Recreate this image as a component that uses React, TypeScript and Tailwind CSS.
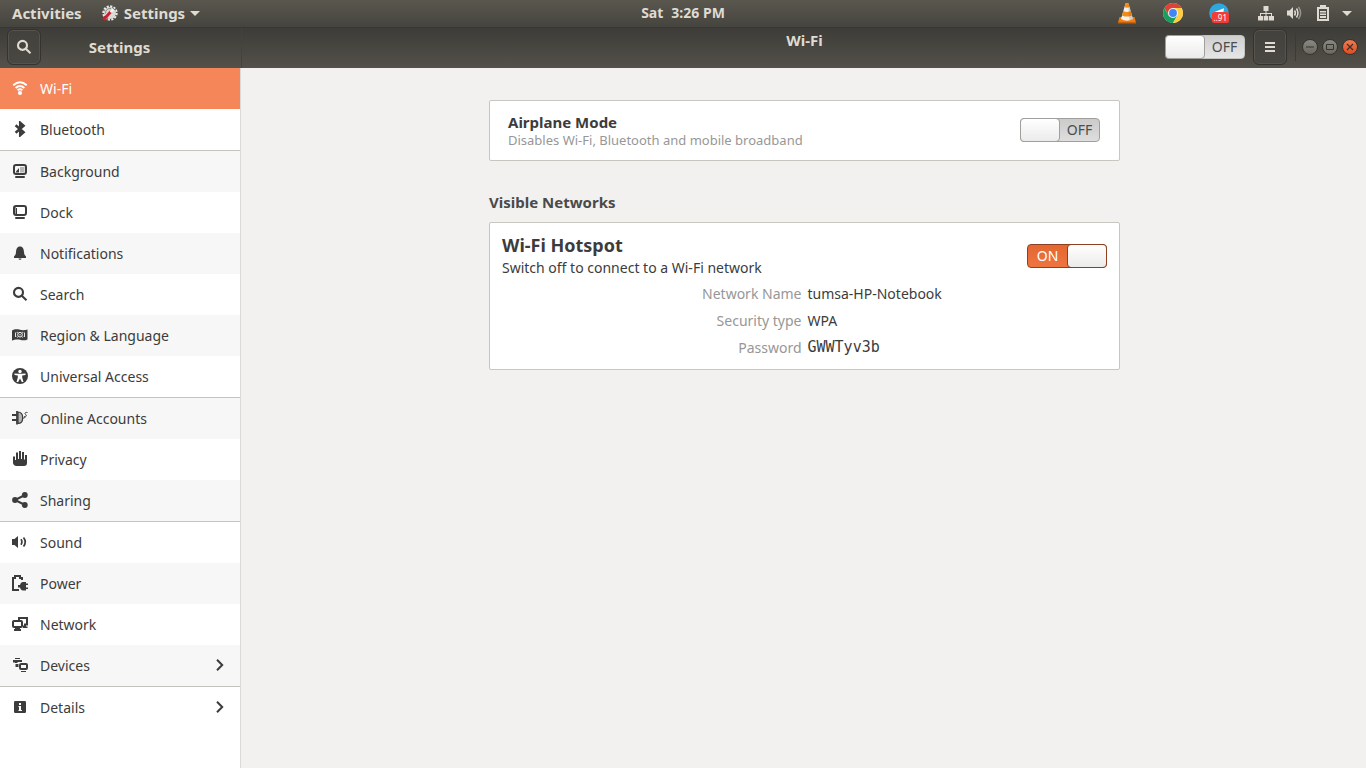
import React, { useState } from "react";

type IconName =
  | "wifi" | "bluetooth" | "background" | "dock" | "bell" | "search" | "region"
  | "access" | "online" | "privacy" | "sharing" | "sound" | "power" | "network"
  | "devices" | "details";

const shapes: Record<IconName, React.ReactNode> = {
  wifi: (
    <>
      <path d="M1.3 5.200Q8 -0.800 14.700 5.200M3.600 8Q8 4 12.400 8M5.600 10.300Q8 8.300 10.400 10.300" fill="none" stroke="currentColor" strokeWidth="1.900" />
      <circle cx="8" cy="13" r="2.100" />
    </>
  ),
  bluetooth: <path d="M3.600 4.200L11.600 11.200L8.200 14.200V1.800L11.600 4.800L3.600 11.800" fill="none" stroke="currentColor" strokeWidth="2.500" />,
  background: (
    <>
      <rect x="2" y="2" width="12" height="9" rx="2" fill="none" stroke="currentColor" strokeWidth="2" />
      <path d="M4 8.500L7 5v3.500zM4 8.500h3v1H4z" />
      <path d="M8 4h4.500v5.500H8z" opacity=".35" />
      <rect x="3" y="13" width="10" height="2" rx="1" />
    </>
  ),
  dock: (
    <>
      <rect x="2" y="2" width="12" height="9" rx="2" fill="none" stroke="currentColor" strokeWidth="2" />
      <path d="M4 4h1v6H4z" />
      <path d="M3 3h1v7H3z" opacity=".5" />
      <rect x="3" y="13" width="10" height="2" rx="1" />
    </>
  ),
  bell: <path d="M8 1.500C5 1.500 4.200 4 4 7 3.900 9 3.400 10.300 2 11.500V13h12v-1.500C12.600 10.300 12.100 9 12 7c-.2-3-1-5.500-4-5.500zM6.500 13.600h3a1.500 1.200 0 0 1-3 0z" />,
  search: <path d="M10.300 10.300L14.500 14.200M11 6.400a4.500 4.500 0 1 1-9 0a4.500 4.500 0 1 1 9 0z" fill="none" stroke="currentColor" strokeWidth="2.100" />,
  region: (
    <>
      <path d="M0 3.500C2 2.200 5 2 8 2.800S13.500 3 15.500 2.500V12.500C13 13.600 10.500 13.500 8 12.800S2 12.700 0 13.600z" />
      <circle cx="8" cy="7.700" r="2.300" fill="none" stroke="#f7f7f7" strokeWidth="1" />
      <path d="M3.500 5.500v4.500M12.500 5.500v4.500M5.600 4.800L4.900 6M10.400 4.800L11.100 6M5.600 10.600L4.900 9.500M10.400 10.600L11.100 9.500" stroke="#f7f7f7" strokeWidth=".9" />
      <circle cx="8" cy="7.700" r=".7" fill="#f7f7f7" />
    </>
  ),
  access: (
    <>
      <circle cx="8" cy="8" r="8" />
      <circle cx="8" cy="3.500" r="1.700" fill="#fff" />
      <path d="M2.500 5.500L6.500 5.800H9.500L13.500 5.500V7L10.200 7.500V9.500L11.500 14H9.800L8 10.500L6.200 14H4.500L5.800 9.500V7.500L2.500 7z" fill="#fff" />
    </>
  ),
  online: (
    <>
      <path d="M0 4h5v2H0zM0 9h5v2H0z" />
      <path d="M5 1v13.500" stroke="currentColor" strokeWidth="1.800" />
      <path d="M6 2c3.200 0 4.700 2.500 4.700 5.700S9.200 13.500 6 13.500z" fill="#b5b5b5" stroke="currentColor" strokeWidth="1.200" />
      <path d="M10.500 8C13.500 8.500 12.500 7 12.800 6.500M15.500 2.500C13 2 12.400 3.500 13.600 4.400S14.500 7.300 12 6.800" fill="none" stroke="currentColor" strokeWidth="1" />
    </>
  ),
  privacy: <path d="M1 5.500h2V9h1V1.500h2V8h1V0h2v8h1V1h2v7.500h1V4h2v8c0 2-1 3-3 3H4.500C2.500 15 1 13.500 1 12z" />,
  sharing: (
    <>
      <path d="M13 3L3 8L13 13" fill="none" stroke="currentColor" strokeWidth="2" />
      <circle cx="12.800" cy="3" r="2.900" />
      <circle cx="3" cy="8" r="2.900" />
      <circle cx="12.800" cy="13" r="2.900" />
    </>
  ),
  sound: (
    <>
      <path d="M0 5h2.500L6 2v12L2.500 11H0z" />
      <path d="M9 5.300Q10.800 8 9 10.700M11.500 3.500Q15 8 11.500 12.500" fill="none" stroke="currentColor" strokeWidth="1.700" />
    </>
  ),
  power: (
    <>
      <path d="M7 15H1V3H3V1H8V3H10V5" fill="none" stroke="currentColor" strokeWidth="2" />
      <path d="M6 10h2C8.500 8 9.500 7 11 7h3v1.500h2V10h-2v2.500h2V14h-2v1.500h-3c-1.500 0-2.500-1-3-3H6z" />
    </>
  ),
  network: (
    <>
      <path d="M7 4V2H15V8.500H12" fill="none" stroke="currentColor" strokeWidth="2" />
      <rect x="1" y="5" width="9" height="6" rx="1" fill="none" stroke="currentColor" strokeWidth="2" />
      <path d="M3 12h5v1h1v2H2v-2h1zM12 9h2v1.500h1.500V12H11v-2z" />
    </>
  ),
  devices: (
    <>
      <path d="M3 1h5v1H3zM1 3h9v2H5.500v1H3V5.500H1zM3.500 7H5v3H3.500zM5 7h1.500v3H5z" />
      <rect x="8" y="7" width="7" height="5" rx="1" fill="none" stroke="currentColor" strokeWidth="2" />
      <path d="M9 14h5V15H9z" />
    </>
  ),
  details: (
    <>
      <rect x="2" y="2" width="12" height="12" rx="1.200" />
      <path d="M7 4h2v2H7zM6.500 7H9v4h1v1H6.500v-1H7V8h-.5z" fill="#fff" />
    </>
  ),
};

function Icon({ name }: { name: IconName }) {
  return (
    <svg viewBox="0 0 16 16" className="mb-px size-4 shrink-0" fill="currentColor" aria-hidden="true">
      {shapes[name]}
    </svg>
  );
}

type Item = { icon: IconName; label: string; endsGroup?: boolean; submenu?: boolean };

const items: Item[] = [
  { icon: "wifi", label: "Wi-Fi" },
  { icon: "bluetooth", label: "Bluetooth", endsGroup: true },
  { icon: "background", label: "Background" },
  { icon: "dock", label: "Dock" },
  { icon: "bell", label: "Notifications" },
  { icon: "search", label: "Search" },
  { icon: "region", label: "Region & Language" },
  { icon: "access", label: "Universal Access", endsGroup: true },
  { icon: "online", label: "Online Accounts" },
  { icon: "privacy", label: "Privacy" },
  { icon: "sharing", label: "Sharing", endsGroup: true },
  { icon: "sound", label: "Sound" },
  { icon: "power", label: "Power" },
  { icon: "network", label: "Network" },
  { icon: "devices", label: "Devices", endsGroup: true, submenu: true },
  { icon: "details", label: "Details", submenu: true },
];

function Switch({ label, initial = false, header = false }: { label: string; initial?: boolean; header?: boolean }) {
  const [on, setOn] = useState(initial);
  const track = on
    ? "flex-row-reverse border-[#8f3f21] bg-linear-to-b from-[#e4672f] to-[#ee7442] text-white"
    : header
      ? "border-[#c4c2be] bg-linear-to-b from-[#cfcfcf] to-[#e6e6e6] text-[#4c4c4c]"
      : "border-[#a09f9c] bg-linear-to-b from-[#cbcbcb] to-[#dedede] text-[#4c4c4c]";
  return (
    <label className={`flex h-6 w-20 shrink-0 cursor-pointer items-stretch rounded border text-sm leading-[22px] ${track}`}>
      <input type="checkbox" role="switch" aria-label={label} checked={on} onChange={(e) => setOn(e.target.checked)} className="sr-only" />
      <span className={`-my-px w-10 rounded border bg-linear-to-b from-white to-[#ebebea] ${on ? "-mr-px border-[#8f3f21]" : "-ml-px border-[#a09f9c]"}`} />
      <span className="flex-1 text-center">{on ? "ON" : "OFF"}</span>
    </label>
  );
}

function SettingsIcon() {
  return (
    <svg viewBox="0 0 16 16" className="size-4" aria-hidden="true">
      <circle cx="8" cy="8" r="6" fill="#d9d9d6" />
      <circle cx="8" cy="8" r="6.700" fill="none" stroke="#e9e9e6" strokeWidth="2" strokeDasharray="2.200 1.300" />
      <path d="M3.500 8.500A4.500 4.500 0 0 1 9 3.600" fill="none" stroke="#8c8a86" strokeWidth="1" />
      <path d="M1.500 14.700L9 6.500" stroke="#cf1f2e" strokeWidth="3" />
      <path d="M8.500 7.300L12 3.800" stroke="#f6f6f6" strokeWidth="2.200" />
      <path d="M10.500 2.300L11.800 4.200L14 5" fill="none" stroke="#77746e" strokeWidth="1" />
    </svg>
  );
}

function VlcIcon() {
  return (
    <svg viewBox="0 0 20 22" className="h-[22px] w-5" aria-hidden="true">
      <path d="M2.500 15h15l1.500 6H1z" fill="#ef7d0b" />
      <path d="M1 20h18v1.500H1z" fill="#c95f04" />
      <path d="M8.500 1.500Q10 .6 11.500 1.500L16 17Q10 20.500 4 17z" fill="#f4f2ee" />
      <path d="M8.500 1.500Q10 .6 11.500 1.500L12.500 5Q10 6.300 7.500 5zM6.300 9Q10 10.800 13.700 9L15 13.400Q10 15.800 5 13.400z" fill="#f28a13" />
      <path d="M11 1.300L15.900 17Q14.600 18 12.500 18.300z" fill="#8a5a2c" opacity=".25" />
    </svg>
  );
}

function ChromeIcon() {
  return (
    <svg viewBox="0 0 24 24" className="size-5" aria-hidden="true">
      <circle cx="12" cy="12" r="12" fill="#fff" />
      <path d="M12 6H22.390A12 12 0 0 0 1.610 6L6.800 15z" fill="#db4437" />
      <path d="M6.800 15L1.610 6A12 12 0 0 0 12 24L17.200 15z" fill="#16a05c" />
      <path d="M17.200 15L12 24A12 12 0 0 0 22.390 6H12z" fill="#ffcd40" />
      <circle cx="12" cy="12" r="6" fill="#f1f1f1" />
      <circle cx="12" cy="12" r="4.700" fill="#4285f4" />
    </svg>
  );
}

function TelegramIcon() {
  return (
    <svg viewBox="0 0 20 20" className="size-5" aria-hidden="true">
      <circle cx="10" cy="10" r="9.800" fill="#2fa6de" />
      <path d="M3.500 9.800L15 5.200L13.500 14L8 10.500z" fill="#fff" />
    </svg>
  );
}

function TopBar() {
  return (
    <header className="grid h-[27px] grid-cols-[1fr_auto_1fr] items-center bg-linear-to-b from-[#5a574f] to-[#45443e] pb-px text-sm font-bold text-[#dfdbd2]">
      <div className="flex items-center gap-5 pl-3 text-[15px]">
        <button className="leading-5">Activities</button>
        <button className="flex items-center gap-1.5 leading-5">
          <SettingsIcon />
          Settings
          <svg viewBox="0 0 10 5" className="-ml-px h-[5px] w-[10px]" fill="currentColor" aria-hidden="true"><path d="M0 0h10L5 5z" /></svg>
        </button>
      </div>
      <button className="flex gap-2 leading-5">
        <span>Sat</span>
        <span>3:26 PM</span>
      </button>
      <div className="flex items-center justify-end pr-[18px]">
        <button aria-label="VLC" className="mr-[26px]"><VlcIcon /></button>
        <button aria-label="Chrome" className="mr-[26px]"><ChromeIcon /></button>
        <button aria-label="Telegram" className="relative mr-[29px]">
          <TelegramIcon />
          <span className="absolute right-0 bottom-0 rounded-xs bg-[#f23c34] px-0.5 text-[8px] leading-[11px] font-normal text-white">..91</span>
        </button>
        <button aria-label="System menu" className="flex items-center gap-3">
          <svg viewBox="0 0 16 16" className="size-4" fill="currentColor" aria-hidden="true">
            <path d="M5.500 1h5v5h-5zM0 11h5v4.500H0zM5.700 11h4.600v4.500H5.700zM11 11h5v4.500h-5zM7.500 6h1v5h-1zM2 8h12v3h-1V9H3v2H2z" />
          </svg>
          <svg viewBox="0 0 16 16" className="size-4" fill="currentColor" aria-hidden="true">
            <path d="M1 5.500h2.500L7 2v12L3.500 10.500H1z" />
            <path d="M8.500 5.500Q10.300 8 8.500 10.500M10.500 3.500Q13.400 8 10.500 12.500" fill="none" stroke="currentColor" strokeWidth="1.500" />
            <path d="M12.500 1.800Q16.700 8 12.500 14.200" fill="none" stroke="currentColor" strokeWidth="1.500" opacity=".5" />
          </svg>
          <svg viewBox="0 0 16 16" className="size-4" fill="currentColor" aria-hidden="true">
            <path d="M6 0h6v2h3v14H3V2h3zM5 4v10h8V4zM6 6h6v1.500H6zM6 8.500h6V10H6zM6 11h6v2H6z" fillRule="evenodd" />
          </svg>
          <svg viewBox="0 0 10 5" className="-mr-1 h-[5px] w-[10px]" fill="currentColor" aria-hidden="true"><path d="M0 0h10L5 5z" /></svg>
        </button>
      </div>
    </header>
  );
}

function HeaderBar() {
  const windowButton = "flex size-4 items-center justify-center rounded-full border border-[#35342f]";
  const toolButton = "flex h-9 w-[34px] items-center justify-center rounded-md border border-[#34332f] bg-[#46453f]/60 shadow-[inset_0_0_0_1px_#55534c]";
  return (
    <div className="flex h-[41px] border-t border-[#383733] bg-linear-to-b from-[#3d3c38] to-[#54514a] font-bold text-[#dfdbd2]">
      <div className="flex w-[242px] shrink-0 items-center border-r border-[#45433e] pb-0.5 pl-[7px]">
        <button aria-label="Search" className={toolButton}><Icon name="search" /></button>
        <h1 className="flex-1 pr-[43px] text-center text-[15px]">Settings</h1>
      </div>
      <div className="grid flex-1 grid-cols-[1fr_auto_1fr] pl-px">
        <h2 className="col-start-2 pt-0.5 text-[15px] leading-5">Wi-Fi</h2>
        <div className="flex items-center justify-end pr-2 pb-0.5 font-normal">
          <Switch label="Wi-Fi" header />
          <button aria-label="Menu" className={`ml-2 ${toolButton}`}>
            <svg viewBox="0 0 10 10" className="size-2.5" fill="currentColor" aria-hidden="true"><path d="M0 0h10v2H0zM0 4h10v2H0zM0 8h10v2H0z" /></svg>
          </button>
          <span className="mr-1.5 ml-2 h-7 w-px bg-[#3b3a35]" />
          <div className="flex gap-1 text-[#35342f]">
            <button aria-label="Minimize" className={`${windowButton} bg-linear-to-b from-[#8b8981] to-[#69675f]`}>
              <svg viewBox="0 0 8 8" className="size-2 shrink-0" fill="currentColor"><path d="M0 3.500h8v1H0z" /></svg>
            </button>
            <button aria-label="Maximize" className={`${windowButton} bg-linear-to-b from-[#8b8981] to-[#69675f]`}>
              <svg viewBox="0 0 8 8" className="size-2 shrink-0" fill="none" stroke="currentColor"><path d="M.5 1.500h7v5h-7z" /></svg>
            </button>
            <button aria-label="Close" className={`${windowButton} bg-linear-to-b from-[#f47850] to-[#df4d1c]`}>
              <svg viewBox="0 0 8 8" className="size-2 shrink-0" fill="none" stroke="currentColor" strokeWidth="1.300"><path d="M1 1l6 6M7 1L1 7" /></svg>
            </button>
          </div>
        </div>
      </div>
    </div>
  );
}

function Sidebar() {
  const [selected, setSelected] = useState(0);
  return (
    <nav className="w-[241px] shrink-0 border-r border-[#dcdad7] bg-white text-sm text-[#3c3c3c]">
      {items.map((item, i) => (
        <button
          key={item.label}
          onClick={() => setSelected(i)}
          className={`box-content flex h-[41px] w-[228px] items-center gap-3 pl-3 text-left ${
            i === selected ? "bg-[#f4865a] text-white" : i % 2 === 0 ? "bg-[#f7f7f7]" : "bg-white"
          } ${item.endsGroup ? "border-b border-[#c5c3c0]" : ""}`}
        >
          <Icon name={item.icon} />
          <span className="flex-1">{item.label}</span>
          {item.submenu && (
            <svg viewBox="0 0 8 12" className="mr-4 mb-px h-3 w-2" fill="none" stroke="currentColor" strokeWidth="2" aria-hidden="true"><path d="M1 .8L6.200 6L1 11.200" /></svg>
          )}
        </button>
      ))}
    </nav>
  );
}

const details = [
  { name: "Network Name", value: "tumsa-HP-Notebook" },
  { name: "Security type", value: "WPA" },
  { name: "Password", value: "GWWTyv3b", mono: true },
];

export default function App() {
  return (
    <div className="flex min-h-screen flex-col bg-[#f2f1ef] font-['Noto_Sans',sans-serif]">
      <TopBar />
      <HeaderBar />
      <div className="flex flex-1">
        <Sidebar />
        <main className="flex-1 pt-8 pr-8 pl-[34px] text-sm text-[#3c3c3c]">
          <div className="mx-auto max-w-[631px]">
            <section className="flex items-center justify-between rounded-xs border border-[#c9c6c2] bg-white pt-[11px] pr-[19px] pb-3 pl-[18px]">
              <div>
                <h3 className="text-[15px] leading-5 font-bold">Airplane Mode</h3>
                <p className="text-[13px] leading-4 text-[#979797]">Disables Wi-Fi, Bluetooth and mobile broadband</p>
              </div>
              <Switch label="Airplane Mode" />
            </section>
            <h3 className="mt-[31px] text-[15px] leading-5 font-bold text-[#4a4a4a]">Visible Networks</h3>
            <section className="mt-2.5 rounded-xs border border-[#c9c6c2] bg-white px-3 pt-2.5 pb-2">
              <div className="flex items-center justify-between">
                <div>
                  <h3 className="text-lg leading-6 font-bold">Wi-Fi Hotspot</h3>
                  <p className="leading-[22px]">Switch off to connect to a Wi-Fi network</p>
                </div>
                <Switch label="Wi-Fi Hotspot" initial />
              </div>
              <dl className="mt-px grid grid-cols-2 gap-x-1.5 leading-[27px]">
                {details.map((d) => (
                  <React.Fragment key={d.name}>
                    <dt className="text-right text-[#979797]">{d.name}</dt>
                    <dd className={d.mono ? "font-['DejaVu_Sans_Mono',monospace] text-[15px]" : ""}>{d.value}</dd>
                  </React.Fragment>
                ))}
              </dl>
            </section>
          </div>
        </main>
      </div>
    </div>
  );
}
